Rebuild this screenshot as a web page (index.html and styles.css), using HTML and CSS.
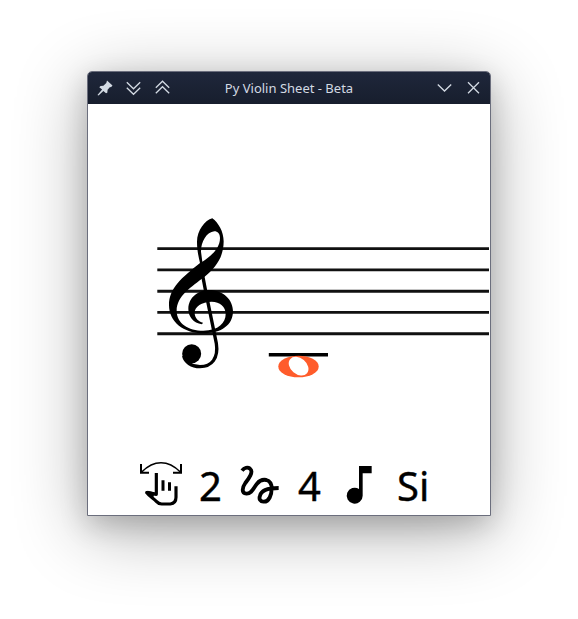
FILE: index.html
```html
<!DOCTYPE html>
<html lang="en">
<head>
<meta charset="utf-8">
<title>Py Violin Sheet - Beta</title>
<link rel="stylesheet" href="styles.css">
</head>
<body>
<main class="window">
  <header class="titlebar">
    <div class="controls">
      <svg class="control" viewBox="0 0 16 16"><path fill="#d3dae3" d="M10 .4 15.500 5.500 14 7.200 13 7 10.600 9.700 10.300 12.700 9 13.300 6.400 10.900 1.500 15.600.5 15 5.100 9.500 2.300 7.200 3.500 5.900 6.400 5.700 9.300 3Z"/></svg>
      <svg class="control" viewBox="0 0 16 16"><path class="line" d="m.8 2.300 6.700 6.500 6.700-6.500M.8 7.800 7.500 14.300l6.700-6.500"/></svg>
      <svg class="control" viewBox="0 0 16 16"><path class="line" d="m.8 7.700 6.700-6.500 6.700 6.500M.8 13.200 7.500 6.700l6.700 6.500"/></svg>
    </div>
    <h1 class="title">Py Violin Sheet - Beta</h1>
    <div class="controls controls-end">
      <svg class="control" viewBox="0 0 16 16"><path class="line" d="m.8 4.500 6.700 6.500 6.700-6.500"/></svg>
      <svg class="control" viewBox="0 0 16 16"><path class="line" d="m2 2.300 11 11m0-11-11 11"/></svg>
    </div>
  </header>
  <svg class="staff" viewBox="88 104 402 351">
    <path stroke="#111" stroke-width="2.900" d="M157.300 248.600H489M157.300 269.900H489M157.300 291.200H489M157.300 312.400H489M157.300 333.700H489"/>
    <g transform="translate(150 210) scale(.33333)">
      <path fill-rule="evenodd" d="M187 25C205 38 221 65 221 94C221 142 197 173 163 201C125 230 80 258 80 302C80 340 115 362 160 362C206 362 227 338 227 312C227 290 210 275 185 275C155 275 134 290 134 308C134 325 146 334 159 338L156 343C130 339 115 320 115 297C115 262 145 240 178 240C220 240 249 270 249 304C249 345 215 370 160 370C100 370 57 335 57 285C57 235 95 203 150 159C144 135 141 115 141 95C141 62 165 30 187 25ZM157 155C185 137 210 115 210 84C210 71 203 64 193 64C170 66 153 95 153 125Z"/>
      <path fill="none" stroke="#000" stroke-width="10" d="M158 197 169 254 199 400C206 445 185 470 150 470C124 470 105 456 101 438"/>
      <circle cx="125" cy="431" r="28.500"/>
      <path d="M124 454Q132 450 146 449L128 459Z"/>
    </g>
    <path stroke="#000" stroke-width="3.600" d="M268.800 354.700H328"/>
    <ellipse cx="298.500" cy="366.500" rx="20.200" ry="10.800" fill="#ff5c2b"/>
    <ellipse cx="298.600" cy="366.200" rx="11" ry="8" fill="#fff" transform="rotate(40 298.600 366.200)"/>
  </svg>
  <footer class="readout">
    <svg class="symbol" viewBox="27 15 132 165">
      <g fill="none" stroke="#000">
        <path stroke-width="5" d="M35 66C72 29 114 29 151 66"/>
        <path stroke-width="6" d="M33 42V68H57M153 42V68H129"/>
        <path stroke-width="9.500" stroke-linejoin="round" d="M79 69V133L50 128C58 139 70 145 79 154Q86 162 95 162H121Q138 160 138 142V109"/>
        <path stroke-width="9" d="M99 91V122M118.500 97V122"/>
      </g>
      <path d="M74 127 53 122Q48 124 48 130L69 146Z"/>
    </svg>
    <span class="value">2</span>
    <svg class="symbol" viewBox="24 15 132 165"><path fill="none" stroke="#000" stroke-width="11.500" d="M36 62C43 53 53 51 60 56C72 65 56 86 46 99C36 113 34 131 49 131C65 132 71 113 81 101C89 91 99 88 109 90C120 93 125 102 125 115C125 135 117 155 102 155C91 156 86 147 90 137C94 120 112 114 146 114"/></svg>
    <span class="value">4</span>
    <svg class="symbol" viewBox="21 15 132 165"><path d="M87 48H125V70H98V137A24 24 0 1 1 87 117Z"/></svg>
    <span class="value">Si</span>
  </footer>
</main>
</body>
</html>
```
FILE: styles.css
```css
* { box-sizing: border-box; }
body {
  margin: 0;
  width: 578px;
  height: 619px;
  padding: 71px 0 0 87px;
  overflow: hidden;
  background: #fff;
  font-family: "Noto Sans", sans-serif;
}
.window {
  width: 404px;
  height: 445px;
  border: 1px solid #6b6e7d;
  border-radius: 5px 5px 0 0;
  background: #fff;
  box-shadow: 0 14px 72px rgba(0, 0, 0, .32), 0 9px 28px rgba(0, 0, 0, .18);
  display: flex;
  flex-direction: column;
}
.titlebar {
  height: 32px;
  flex: none;
  display: grid;
  grid-template-columns: 1fr auto 1fr;
  align-items: center;
  padding: 0 8px 0 9px;
  background: linear-gradient(#1f273b, #171e2d);
  border-radius: 4px 4px 0 0;
}
.controls { display: flex; gap: 13px; }
.controls-end { justify-content: flex-end; }
.control { width: 16px; height: 16px; display: block; }
.line { fill: none; stroke: #d3dae3; stroke-width: 1.3; }
.title {
  margin: 0 1px 0 0;
  font-size: 13px;
  font-weight: 400;
  line-height: 18px;
  color: #d3dae3;
}
.staff { display: block; width: 402px; height: 351px; flex: none; }
.readout {
  display: flex;
  align-items: center;
  gap: 16px;
  height: 55px;
  padding-left: 51px;
}
.symbol { width: 44px; height: 55px; flex: none; }
.value {
  min-width: 23px;
  font-size: 40px;
  line-height: 55px;
  color: #000;
  padding-top: 5px;
  -webkit-text-stroke: .4px #000;
}
```
